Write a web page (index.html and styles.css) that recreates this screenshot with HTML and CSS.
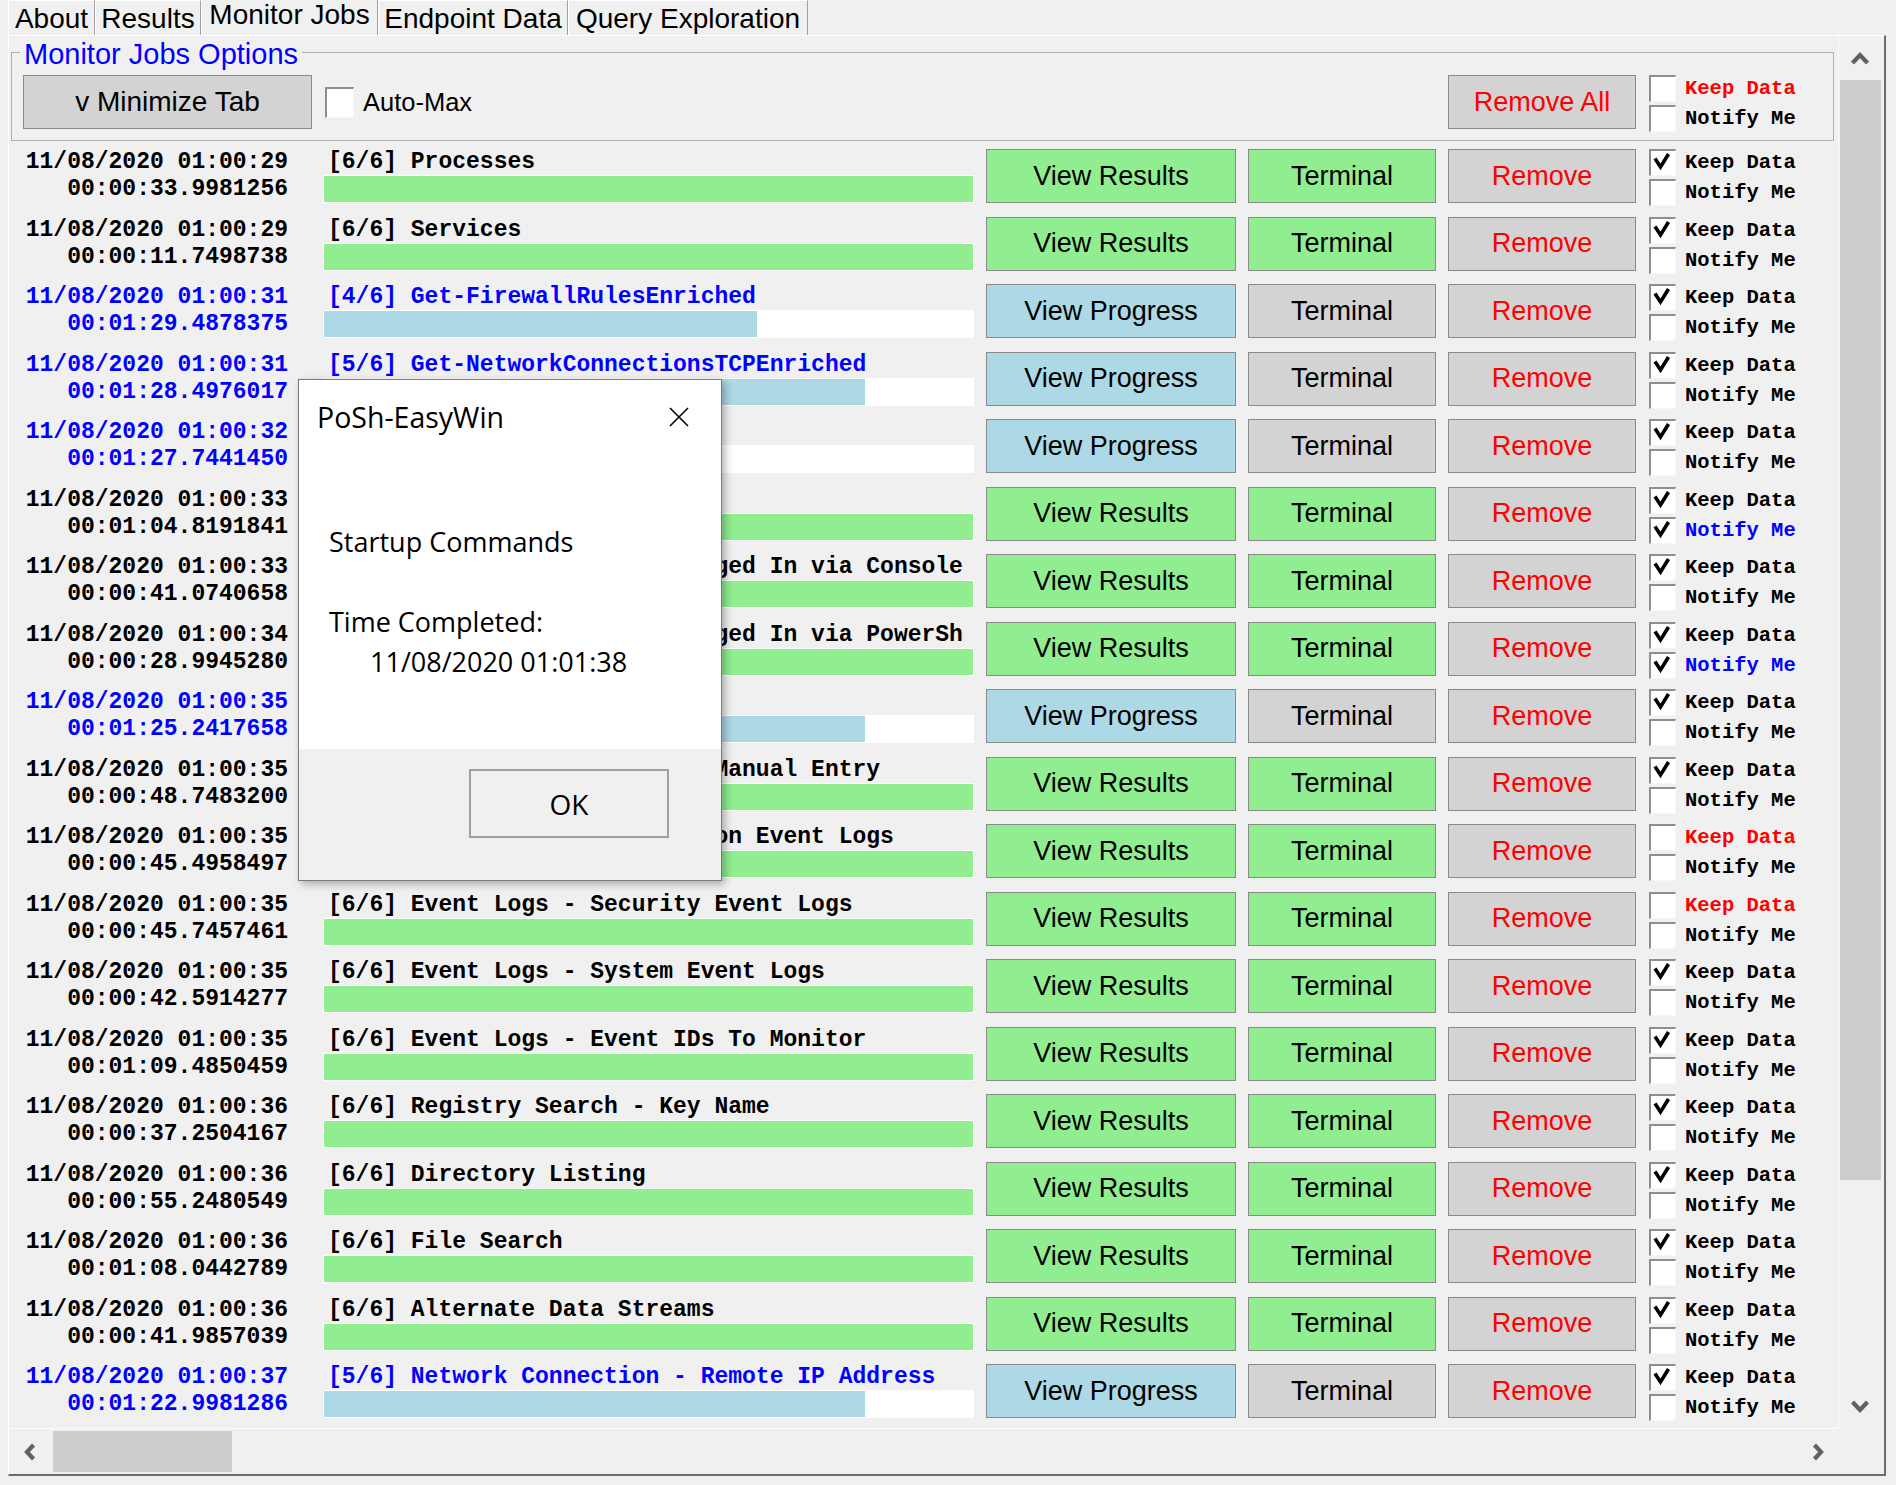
FILE: index.html
```html
<!DOCTYPE html>
<html>
<head>
<meta charset="utf-8">
<title>PoSh-EasyWin - Monitor Jobs</title>
<link rel="stylesheet" href="styles.css">
</head>
<body>
<div class="tabs">
  <div class="tab t-about">About</div>
  <div class="tab t-results">Results</div>
  <div class="tab t-monitor active">Monitor Jobs</div>
  <div class="tab t-endpoint">Endpoint Data</div>
  <div class="tab t-query">Query Exploration</div>
</div>

<div class="page">
  <div class="panel">
    <fieldset class="options">
      <legend>Monitor Jobs Options</legend>
      <div class="opt-row">
        <button class="btn gray min">v Minimize Tab</button>
        <span class="cb big"></span>
        <span class="automax">Auto-Max</span>
        <button class="btn gray red remove-all">Remove All</button>
        <div class="checks top">
          <div class="chk"><span class="cb"></span><span class="lbl red">Keep Data</span></div>
          <div class="chk"><span class="cb"></span><span class="lbl">Notify Me</span></div>
        </div>
      </div>
    </fieldset>

    <div class="jobs">
      <div class="job">
        <div class="times"><div>11/08/2020 01:00:29</div><div>00:00:33.9981256</div></div>
        <div class="info"><div class="title">[6/6] Processes</div><div class="track"><div class="fill done" style="width:100%"></div></div></div>
        <button class="btn green">View Results</button>
        <button class="btn green">Terminal</button>
        <button class="btn gray red">Remove</button>
        <div class="checks"><div class="chk"><span class="cb"><svg viewBox="0 0 24 24"><path d="M4 7.5 L9.5 16 L17.5 3"/></svg></span><span class="lbl">Keep Data</span></div><div class="chk"><span class="cb"></span><span class="lbl">Notify Me</span></div></div>
      </div>

      <div class="job">
        <div class="times"><div>11/08/2020 01:00:29</div><div>00:00:11.7498738</div></div>
        <div class="info"><div class="title">[6/6] Services</div><div class="track"><div class="fill done" style="width:100%"></div></div></div>
        <button class="btn green">View Results</button>
        <button class="btn green">Terminal</button>
        <button class="btn gray red">Remove</button>
        <div class="checks"><div class="chk"><span class="cb"><svg viewBox="0 0 24 24"><path d="M4 7.5 L9.5 16 L17.5 3"/></svg></span><span class="lbl">Keep Data</span></div><div class="chk"><span class="cb"></span><span class="lbl">Notify Me</span></div></div>
      </div>

      <div class="job run">
        <div class="times"><div>11/08/2020 01:00:31</div><div>00:01:29.4878375</div></div>
        <div class="info"><div class="title">[4/6] Get-FirewallRulesEnriched</div><div class="track"><div class="fill prog" style="width:66.67%"></div></div></div>
        <button class="btn blue">View Progress</button>
        <button class="btn gray">Terminal</button>
        <button class="btn gray red">Remove</button>
        <div class="checks"><div class="chk"><span class="cb"><svg viewBox="0 0 24 24"><path d="M4 7.5 L9.5 16 L17.5 3"/></svg></span><span class="lbl">Keep Data</span></div><div class="chk"><span class="cb"></span><span class="lbl">Notify Me</span></div></div>
      </div>

      <div class="job run">
        <div class="times"><div>11/08/2020 01:00:31</div><div>00:01:28.4976017</div></div>
        <div class="info"><div class="title">[5/6] Get-NetworkConnectionsTCPEnriched</div><div class="track"><div class="fill prog" style="width:83.33%"></div></div></div>
        <button class="btn blue">View Progress</button>
        <button class="btn gray">Terminal</button>
        <button class="btn gray red">Remove</button>
        <div class="checks"><div class="chk"><span class="cb"><svg viewBox="0 0 24 24"><path d="M4 7.5 L9.5 16 L17.5 3"/></svg></span><span class="lbl">Keep Data</span></div><div class="chk"><span class="cb"></span><span class="lbl">Notify Me</span></div></div>
      </div>

      <div class="job run">
        <div class="times"><div>11/08/2020 01:00:32</div><div>00:01:27.7441450</div></div>
        <div class="info"><div class="title">[3/6] Get-ServicesEnriched</div><div class="track"><div class="fill prog" style="width:50%"></div></div></div>
        <button class="btn blue">View Progress</button>
        <button class="btn gray">Terminal</button>
        <button class="btn gray red">Remove</button>
        <div class="checks"><div class="chk"><span class="cb"><svg viewBox="0 0 24 24"><path d="M4 7.5 L9.5 16 L17.5 3"/></svg></span><span class="lbl">Keep Data</span></div><div class="chk"><span class="cb"></span><span class="lbl">Notify Me</span></div></div>
      </div>

      <div class="job">
        <div class="times"><div>11/08/2020 01:00:33</div><div>00:01:04.8191841</div></div>
        <div class="info"><div class="title">[6/6] Logon Activity</div><div class="track"><div class="fill done" style="width:100%"></div></div></div>
        <button class="btn green">View Results</button>
        <button class="btn green">Terminal</button>
        <button class="btn gray red">Remove</button>
        <div class="checks"><div class="chk"><span class="cb"><svg viewBox="0 0 24 24"><path d="M4 7.5 L9.5 16 L17.5 3"/></svg></span><span class="lbl">Keep Data</span></div><div class="chk"><span class="cb"><svg viewBox="0 0 24 24"><path d="M4 7.5 L9.5 16 L17.5 3"/></svg></span><span class="lbl blue-t">Notify Me</span></div></div>
      </div>

      <div class="job">
        <div class="times"><div>11/08/2020 01:00:33</div><div>00:00:41.0740658</div></div>
        <div class="info"><div class="title">[6/6] Accounts Currently Logged In via Console</div><div class="track"><div class="fill done" style="width:100%"></div></div></div>
        <button class="btn green">View Results</button>
        <button class="btn green">Terminal</button>
        <button class="btn gray red">Remove</button>
        <div class="checks"><div class="chk"><span class="cb"><svg viewBox="0 0 24 24"><path d="M4 7.5 L9.5 16 L17.5 3"/></svg></span><span class="lbl">Keep Data</span></div><div class="chk"><span class="cb"></span><span class="lbl">Notify Me</span></div></div>
      </div>

      <div class="job">
        <div class="times"><div>11/08/2020 01:00:34</div><div>00:00:28.9945280</div></div>
        <div class="info"><div class="title">[6/6] Accounts Currently Logged In via PowerShell</div><div class="track"><div class="fill done" style="width:100%"></div></div></div>
        <button class="btn green">View Results</button>
        <button class="btn green">Terminal</button>
        <button class="btn gray red">Remove</button>
        <div class="checks"><div class="chk"><span class="cb"><svg viewBox="0 0 24 24"><path d="M4 7.5 L9.5 16 L17.5 3"/></svg></span><span class="lbl">Keep Data</span></div><div class="chk"><span class="cb"><svg viewBox="0 0 24 24"><path d="M4 7.5 L9.5 16 L17.5 3"/></svg></span><span class="lbl blue-t">Notify Me</span></div></div>
      </div>

      <div class="job run">
        <div class="times"><div>11/08/2020 01:00:35</div><div>00:01:25.2417658</div></div>
        <div class="info"><div class="title">[5/6] Get-ProcessesEnriched</div><div class="track"><div class="fill prog" style="width:83.33%"></div></div></div>
        <button class="btn blue">View Progress</button>
        <button class="btn gray">Terminal</button>
        <button class="btn gray red">Remove</button>
        <div class="checks"><div class="chk"><span class="cb"><svg viewBox="0 0 24 24"><path d="M4 7.5 L9.5 16 L17.5 3"/></svg></span><span class="lbl">Keep Data</span></div><div class="chk"><span class="cb"></span><span class="lbl">Notify Me</span></div></div>
      </div>

      <div class="job">
        <div class="times"><div>11/08/2020 01:00:35</div><div>00:00:48.7483200</div></div>
        <div class="info"><div class="title">[6/6] Event Logs - Event ID Manual Entry</div><div class="track"><div class="fill done" style="width:100%"></div></div></div>
        <button class="btn green">View Results</button>
        <button class="btn green">Terminal</button>
        <button class="btn gray red">Remove</button>
        <div class="checks"><div class="chk"><span class="cb"><svg viewBox="0 0 24 24"><path d="M4 7.5 L9.5 16 L17.5 3"/></svg></span><span class="lbl">Keep Data</span></div><div class="chk"><span class="cb"></span><span class="lbl">Notify Me</span></div></div>
      </div>

      <div class="job">
        <div class="times"><div>11/08/2020 01:00:35</div><div>00:00:45.4958497</div></div>
        <div class="info"><div class="title">[6/6] Event Logs - Application Event Logs</div><div class="track"><div class="fill done" style="width:100%"></div></div></div>
        <button class="btn green">View Results</button>
        <button class="btn green">Terminal</button>
        <button class="btn gray red">Remove</button>
        <div class="checks"><div class="chk"><span class="cb"></span><span class="lbl red">Keep Data</span></div><div class="chk"><span class="cb"></span><span class="lbl">Notify Me</span></div></div>
      </div>

      <div class="job">
        <div class="times"><div>11/08/2020 01:00:35</div><div>00:00:45.7457461</div></div>
        <div class="info"><div class="title">[6/6] Event Logs - Security Event Logs</div><div class="track"><div class="fill done" style="width:100%"></div></div></div>
        <button class="btn green">View Results</button>
        <button class="btn green">Terminal</button>
        <button class="btn gray red">Remove</button>
        <div class="checks"><div class="chk"><span class="cb"></span><span class="lbl red">Keep Data</span></div><div class="chk"><span class="cb"></span><span class="lbl">Notify Me</span></div></div>
      </div>

      <div class="job">
        <div class="times"><div>11/08/2020 01:00:35</div><div>00:00:42.5914277</div></div>
        <div class="info"><div class="title">[6/6] Event Logs - System Event Logs</div><div class="track"><div class="fill done" style="width:100%"></div></div></div>
        <button class="btn green">View Results</button>
        <button class="btn green">Terminal</button>
        <button class="btn gray red">Remove</button>
        <div class="checks"><div class="chk"><span class="cb"><svg viewBox="0 0 24 24"><path d="M4 7.5 L9.5 16 L17.5 3"/></svg></span><span class="lbl">Keep Data</span></div><div class="chk"><span class="cb"></span><span class="lbl">Notify Me</span></div></div>
      </div>

      <div class="job">
        <div class="times"><div>11/08/2020 01:00:35</div><div>00:01:09.4850459</div></div>
        <div class="info"><div class="title">[6/6] Event Logs - Event IDs To Monitor</div><div class="track"><div class="fill done" style="width:100%"></div></div></div>
        <button class="btn green">View Results</button>
        <button class="btn green">Terminal</button>
        <button class="btn gray red">Remove</button>
        <div class="checks"><div class="chk"><span class="cb"><svg viewBox="0 0 24 24"><path d="M4 7.5 L9.5 16 L17.5 3"/></svg></span><span class="lbl">Keep Data</span></div><div class="chk"><span class="cb"></span><span class="lbl">Notify Me</span></div></div>
      </div>

      <div class="job">
        <div class="times"><div>11/08/2020 01:00:36</div><div>00:00:37.2504167</div></div>
        <div class="info"><div class="title">[6/6] Registry Search - Key Name</div><div class="track"><div class="fill done" style="width:100%"></div></div></div>
        <button class="btn green">View Results</button>
        <button class="btn green">Terminal</button>
        <button class="btn gray red">Remove</button>
        <div class="checks"><div class="chk"><span class="cb"><svg viewBox="0 0 24 24"><path d="M4 7.5 L9.5 16 L17.5 3"/></svg></span><span class="lbl">Keep Data</span></div><div class="chk"><span class="cb"></span><span class="lbl">Notify Me</span></div></div>
      </div>

      <div class="job">
        <div class="times"><div>11/08/2020 01:00:36</div><div>00:00:55.2480549</div></div>
        <div class="info"><div class="title">[6/6] Directory Listing</div><div class="track"><div class="fill done" style="width:100%"></div></div></div>
        <button class="btn green">View Results</button>
        <button class="btn green">Terminal</button>
        <button class="btn gray red">Remove</button>
        <div class="checks"><div class="chk"><span class="cb"><svg viewBox="0 0 24 24"><path d="M4 7.5 L9.5 16 L17.5 3"/></svg></span><span class="lbl">Keep Data</span></div><div class="chk"><span class="cb"></span><span class="lbl">Notify Me</span></div></div>
      </div>

      <div class="job">
        <div class="times"><div>11/08/2020 01:00:36</div><div>00:01:08.0442789</div></div>
        <div class="info"><div class="title">[6/6] File Search</div><div class="track"><div class="fill done" style="width:100%"></div></div></div>
        <button class="btn green">View Results</button>
        <button class="btn green">Terminal</button>
        <button class="btn gray red">Remove</button>
        <div class="checks"><div class="chk"><span class="cb"><svg viewBox="0 0 24 24"><path d="M4 7.5 L9.5 16 L17.5 3"/></svg></span><span class="lbl">Keep Data</span></div><div class="chk"><span class="cb"></span><span class="lbl">Notify Me</span></div></div>
      </div>

      <div class="job">
        <div class="times"><div>11/08/2020 01:00:36</div><div>00:00:41.9857039</div></div>
        <div class="info"><div class="title">[6/6] Alternate Data Streams</div><div class="track"><div class="fill done" style="width:100%"></div></div></div>
        <button class="btn green">View Results</button>
        <button class="btn green">Terminal</button>
        <button class="btn gray red">Remove</button>
        <div class="checks"><div class="chk"><span class="cb"><svg viewBox="0 0 24 24"><path d="M4 7.5 L9.5 16 L17.5 3"/></svg></span><span class="lbl">Keep Data</span></div><div class="chk"><span class="cb"></span><span class="lbl">Notify Me</span></div></div>
      </div>

      <div class="job run">
        <div class="times"><div>11/08/2020 01:00:37</div><div>00:01:22.9981286</div></div>
        <div class="info"><div class="title">[5/6] Network Connection - Remote IP Address</div><div class="track"><div class="fill prog" style="width:83.33%"></div></div></div>
        <button class="btn blue">View Progress</button>
        <button class="btn gray">Terminal</button>
        <button class="btn gray red">Remove</button>
        <div class="checks"><div class="chk"><span class="cb"><svg viewBox="0 0 24 24"><path d="M4 7.5 L9.5 16 L17.5 3"/></svg></span><span class="lbl">Keep Data</span></div><div class="chk"><span class="cb"></span><span class="lbl">Notify Me</span></div></div>
      </div>
    </div>
  </div>

  <div class="vscroll">
    <div class="vs-arrow"><svg width="20" height="16" viewBox="0 0 20 16"><polyline points="2.5,13 10,5 17.5,13"/></svg></div>
    <div class="vs-thumb"></div>
    <div class="vs-space"></div>
    <div class="vs-arrow"><svg width="20" height="16" viewBox="0 0 20 16"><polyline points="2.5,3 10,11 17.5,3"/></svg></div>
  </div>

  <div class="hscroll">
    <div class="hs-arrow"><svg width="14" height="20" viewBox="0 0 14 20"><polyline points="10.5,3 4,10 10.5,17"/></svg></div>
    <div class="hs-thumb"></div>
    <div class="hs-space"></div>
    <div class="hs-arrow right"><svg width="14" height="20" viewBox="0 0 14 20"><polyline points="3.5,3 10,10 3.5,17"/></svg></div>
  </div>

  <div class="corner"></div>
</div>

<div class="dialog">
  <div class="dlg-body">
    <div class="dlg-head">
      <span class="dlg-title">PoSh-EasyWin</span>
      <svg class="dlg-x" width="20" height="20" viewBox="0 0 20 20"><path d="M1 1 L19 19 M19 1 L1 19"/></svg>
    </div>
    <div class="dlg-msg">
      <div>Startup Commands</div>
      <div>&nbsp;</div>
      <div>Time Completed:</div>
      <div class="indent">11/08/2020 01:01:38</div>
    </div>
  </div>
  <div class="dlg-foot">
    <button class="ok">OK</button>
  </div>
</div>
</body>
</html>
```

FILE: styles.css
```css
* { box-sizing: border-box; }

html, body {
  margin: 0;
  padding: 0;
}

body {
  width: 1896px;
  height: 1485px;
  overflow: hidden;
  position: relative;
  background: #f0f0f0;
  color: #000;
  font-family: "Liberation Sans", Arial, sans-serif;
}

/* ---------- tab strip ---------- */
.tabs {
  display: flex;
  height: 35px;
  padding-left: 8px;
}

.tab {
  height: 35px;
  padding-top: 2px;
  font-size: 28px;
  line-height: 31px;
  text-align: center;
  border-left: 1px solid #ffffff;
  border-right: 1px solid #a0a0a0;
  border-top: 1px solid #ffffff;
  white-space: nowrap;
}

.tab.active {
  padding-top: 0;
  line-height: 30px;
  border-top: none;
}

.t-about { width: 87px; }
.t-results { width: 106px; }
.t-monitor { width: 177px; }
.t-endpoint { width: 190px; }
.t-query { width: 240px; }

/* ---------- tab page ---------- */
.page {
  margin-left: 8px;
  width: 1878px;
  height: 1441px;
  border-top: 1px solid #ffffff;
  border-left: 1px solid #ffffff;
  border-right: 2px solid #6c6c6c;
  border-bottom: 2px solid #6c6c6c;
  display: grid;
  grid-template-columns: 1830px 45px;
  grid-template-rows: 1393px 45px;
}

.panel {
  overflow: hidden;
  border-right: 1px solid #fcfcfc;
  border-bottom: 1px solid #fcfcfc;
}

/* ---------- options group ---------- */
.options {
  margin: 0 0 0 2px;
  width: 1823px;
  min-width: 0;
  border: 1px solid #b0b0b0;
  padding: 7px 11px 11px 11px;
}

.options legend {
  font-size: 29px;
  line-height: 28px;
  padding: 4px 4px 0 4px;
  color: #0000ff;
  margin-left: -3px;
}

.opt-row {
  display: flex;
  align-items: center;
  height: 54px;
}

.btn {
  font-family: "Liberation Sans", Arial, sans-serif;
  font-size: 27px;
  height: 54px;
  border: 1px solid #8a8a8a;
  padding: 0;
  margin: 0;
  color: #000;
  white-space: nowrap;
}

.btn.gray { background: #d3d3d3; }
.btn.green { background: #90ee90; }
.btn.blue { background: #add8e6; }
.btn.red { color: #ff0000; }

.min {
  width: 289px;
  font-size: 28px;
}

.cb {
  display: flex;
  flex: none;
  width: 27px;
  height: 27px;
  background: #ffffff;
  border-top: 2px solid #8e8e8e;
  border-left: 2px solid #8e8e8e;
  border-right: 1px solid #f6f6f6;
  border-bottom: 1px solid #f6f6f6;
}

.cb svg {
  width: 24px;
  height: 24px;
}

.cb svg path {
  fill: none;
  stroke: #000;
  stroke-width: 3.6;
  stroke-linejoin: miter;
}

.cb.big {
  width: 29px;
  height: 31px;
  margin-left: 13px;
}

.automax {
  margin-left: 9px;
  font-size: 25.5px;
}

.remove-all {
  margin-left: auto;
  margin-right: 12px;
  width: 188px;
}

.checks {
  width: 174px;
  display: flex;
  flex-direction: column;
  gap: 3px;
  padding-left: 1px;
}

.checks.top {
  align-self: flex-start;
}

.chk {
  display: flex;
  align-items: center;
  height: 27px;
}

.lbl {
  margin-left: 9px;
  font-family: "Liberation Mono", "Courier New", monospace;
  font-weight: bold;
  font-size: 20.5px;
  white-space: nowrap;
}

.lbl.red { color: #ff0000; }
.lbl.blue-t { color: #0000ff; }

/* ---------- job rows ---------- */
.jobs {
  margin-top: 8px;
}

.job {
  display: grid;
  grid-template-columns: 302px 651px 250px 188px 188px 174px;
  column-gap: 12px;
  height: 54px;
  margin-bottom: 13.5px;
}

.times {
  text-align: right;
  padding-right: 23px;
  font-family: "Liberation Mono", "Courier New", monospace;
  font-weight: bold;
  font-size: 23px;
  line-height: 27px;
  white-space: nowrap;
}

.info {
  display: flex;
  flex-direction: column;
  min-width: 0;
}

.title {
  height: 26px;
  margin-right: 10px;
  padding-left: 5px;
  font-family: "Liberation Mono", "Courier New", monospace;
  font-weight: bold;
  font-size: 23px;
  line-height: 26px;
  white-space: nowrap;
  overflow: hidden;
}

.track {
  height: 28px;
  background: #ffffff;
  padding: 1px;
}

.fill {
  height: 100%;
}

.fill.done { background: #90ee90; }
.fill.prog { background: #add8e6; }

.job.run .times,
.job.run .title {
  color: #0000ff;
}

/* ---------- scrollbars ---------- */
.vscroll {
  display: flex;
  flex-direction: column;
}

.vs-arrow {
  height: 44px;
  display: flex;
  align-items: center;
  justify-content: center;
  padding-right: 3px;
}

.vs-arrow svg polyline,
.hs-arrow svg polyline {
  fill: none;
  stroke: #606060;
  stroke-width: 4.2;
  stroke-linejoin: miter;
}

.vs-thumb {
  height: 1100px;
  width: 41px;
  margin-left: 1px;
  background: #cdcdcd;
}

.vs-space { flex: 1; }

.hscroll {
  display: flex;
  align-items: center;
}

.hs-arrow {
  width: 41px;
  height: 41px;
  display: flex;
  align-items: center;
  justify-content: center;
}

.hs-arrow.right {
  width: 42px;
}

.hs-thumb {
  width: 179px;
  height: 41px;
  margin-left: 3px;
  background: #cdcdcd;
}

.hs-space { flex: 1; }

/* ---------- message box ---------- */
.dialog {
  position: absolute;
  left: 298px;
  top: 379px;
  width: 424px;
  height: 502px;
  border: 1px solid #7a7a7a;
  background: #f0f0f0;
  box-shadow: 3px 3px 8px rgba(0, 0, 0, 0.3);
  display: flex;
  flex-direction: column;
  font-family: "Open Sans", "Noto Sans", sans-serif;
}

.dlg-body {
  height: 369px;
  background: #ffffff;
  padding: 0 32px 0 18px;
}

.dlg-head {
  height: 74px;
  display: flex;
  align-items: center;
  justify-content: space-between;
}

.dlg-title {
  font-size: 28.5px;
}

.dlg-x path {
  stroke: #000;
  stroke-width: 1.6;
  fill: none;
}

.dlg-msg {
  margin-top: 68px;
  padding-left: 12px;
  font-size: 27px;
  line-height: 40px;
}

.indent {
  padding-left: 41px;
}

.dlg-foot {
  flex: 1;
  display: flex;
  justify-content: flex-end;
  align-items: flex-start;
  padding: 20px 52px 0 0;
}

.ok {
  width: 200px;
  height: 69px;
  border: 2px solid #a0a0a0;
  background: #f0f0f0;
  font-family: "Open Sans", "Noto Sans", sans-serif;
  font-size: 28px;
  color: #000;
  padding: 0;
}
```
